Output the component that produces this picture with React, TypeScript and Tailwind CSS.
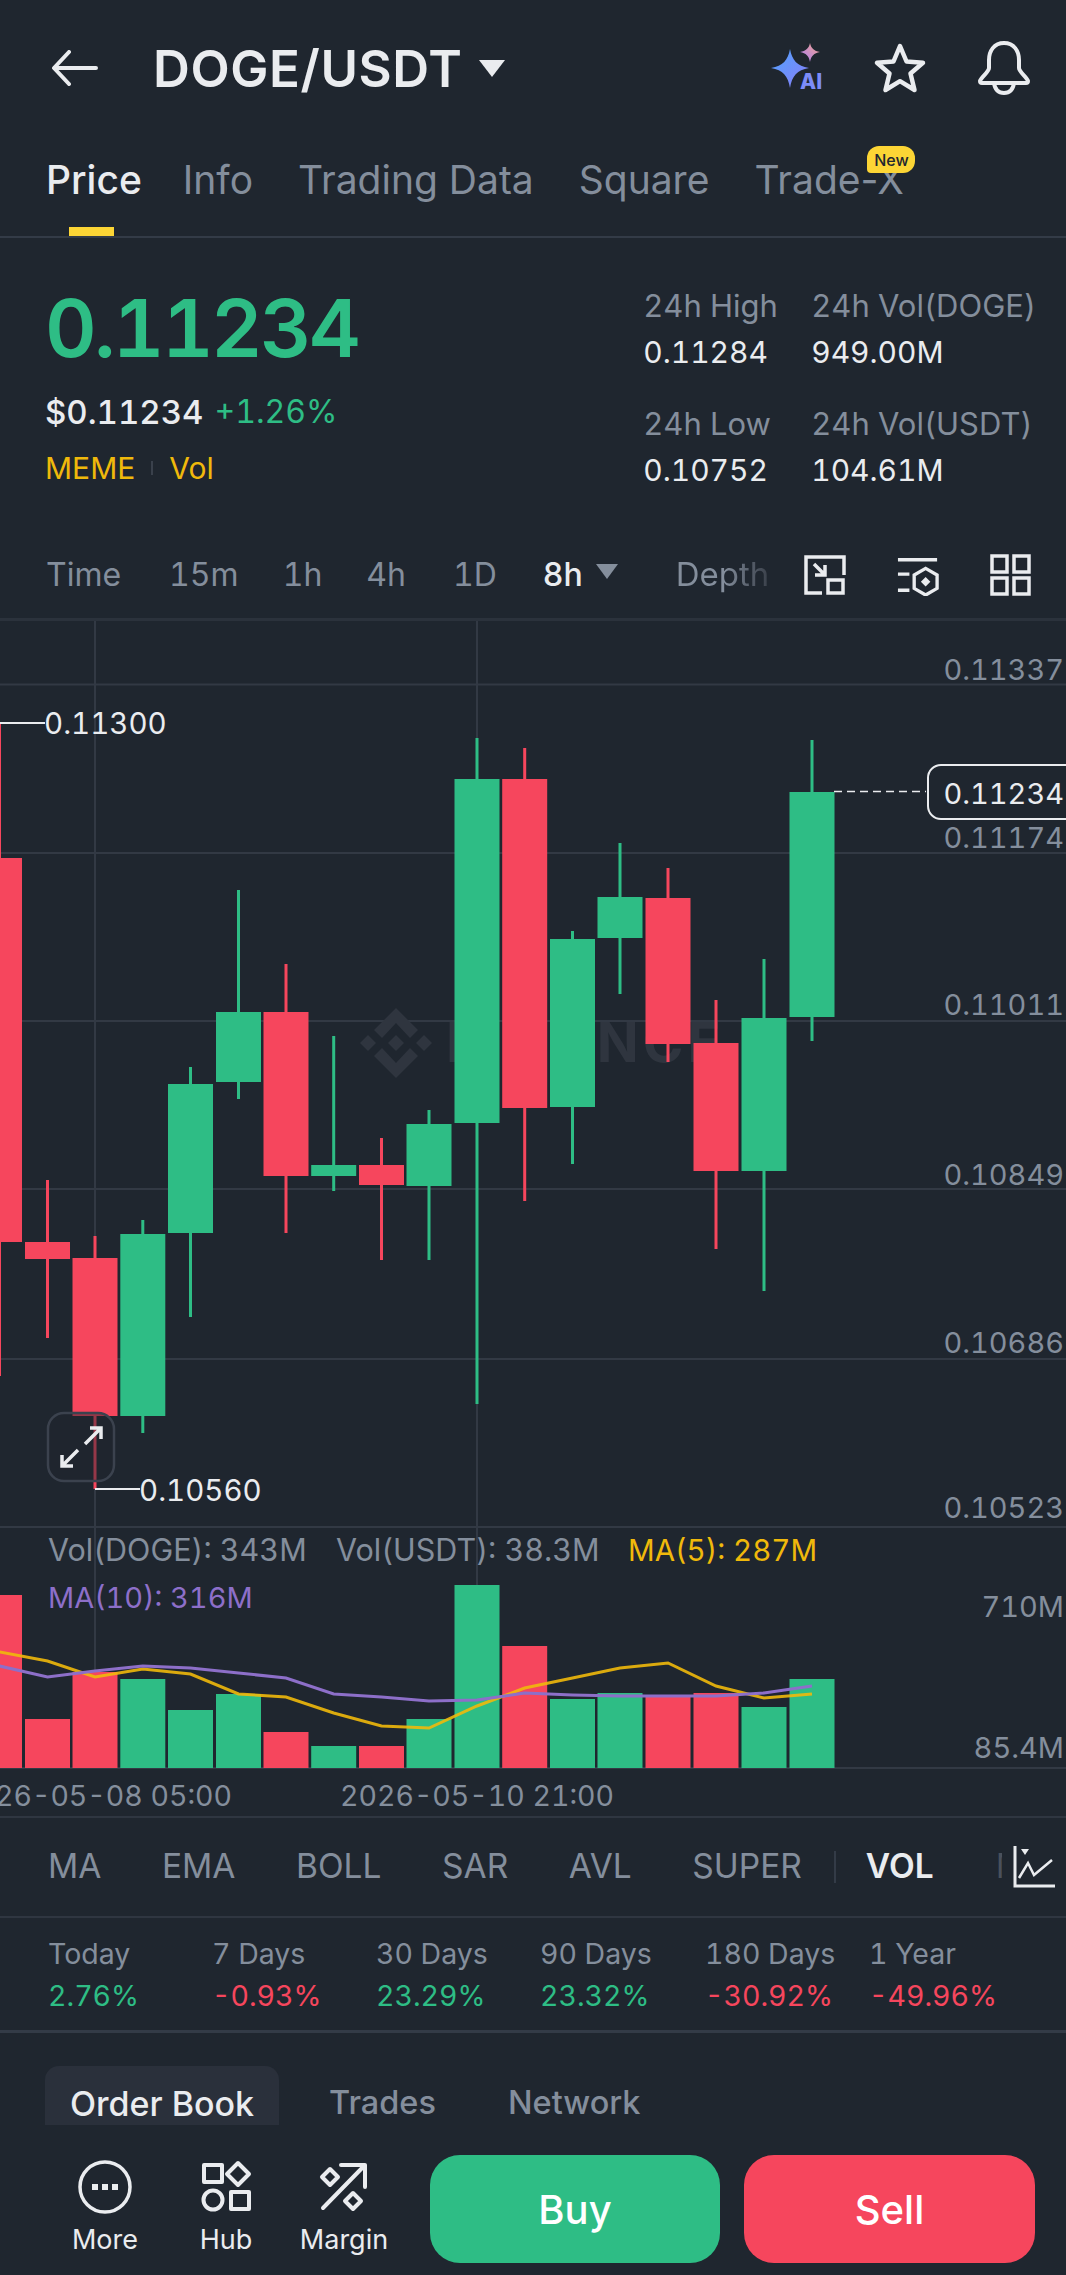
import React from "react";

const GREEN = "#2ebd85";
const RED = "#f6465d";

// candle geometry read off the screenshot: [x, open/top, bottom, wick top, wick bottom, up?]
const candles: [number, number, number, number, number, boolean][] = [
  [-0.5, 858, 1242, 723, 1376, false],
  [47.5, 1242, 1259, 1180, 1338, false],
  [95, 1258, 1416, 1236, 1489, false],
  [142.8, 1234, 1416, 1220, 1433, true],
  [190.5, 1084, 1233, 1067, 1317, true],
  [238.5, 1012, 1082, 890, 1099, true],
  [286, 1012, 1176, 964, 1233, false],
  [333.7, 1165, 1176, 1036, 1191, true],
  [381.5, 1165, 1185, 1138, 1260, false],
  [429, 1124, 1186, 1110, 1260, true],
  [477, 779, 1123, 738, 1404, true],
  [524.7, 779, 1108, 748, 1201, false],
  [572.5, 939, 1107, 931, 1164, true],
  [620, 897, 938, 843, 994, true],
  [668, 898, 1044, 868, 1062, false],
  [716, 1043, 1171, 1000, 1249, false],
  [764, 1018, 1171, 959, 1291, true],
  [812, 792, 1017, 740, 1041, true],
];

const volTops = [1595, 1719, 1672, 1679, 1710, 1694, 1732, 1746, 1746, 1719, 1585, 1646, 1699, 1693, 1696, 1693, 1707, 1679];
const ma5 = [1652, 1661, 1677, 1669, 1674, 1694, 1697, 1713, 1726, 1728, 1706, 1688, 1678, 1668, 1663, 1686, 1698, 1694];
const ma10 = [1666, 1677, 1671, 1666, 1668, 1673, 1678, 1694, 1697, 1701, 1700, 1693, 1695, 1696, 1696, 1696, 1693, 1686];

const priceAxis: [string, number][] = [
  ["0.11337", 680],
  ["0.11174", 848],
  ["0.11011", 1015],
  ["0.10849", 1185],
  ["0.10686", 1353],
  ["0.10523", 1518],
];

const gridY = [684.5, 853, 1021, 1189, 1359, 1527, 1768];

function linePoints(ys: number[]) {
  return ys.map((y, i) => `${candles[i][0]},${y}`).join(" ");
}

function Chart() {
  return (
    <svg width={1066} height={1195} viewBox="0 621 1066 1195" className="block">
      {gridY.map((y) => (
        <line key={y} x1={0} x2={1066} y1={y} y2={y} stroke="#323944" strokeWidth={2} />
      ))}
      <line x1={95} x2={95} y1={620} y2={1768} stroke="#323944" strokeWidth={2} />
      <line x1={477} x2={477} y1={620} y2={1768} stroke="#323944" strokeWidth={2} />

      {/* watermark */}
      <g fill="#2f353f" transform="translate(396 1043)">
        <polygon points="0,-35 22,-13 14,-5 0,-20 -14,-5 -22,-13" />
        <polygon points="0,35 22,13 14,5 0,20 -14,5 -22,13" />
        <polygon points="0,-8 8,0 0,8 -8,0" />
        <polygon points="-28,-8 -20,0 -28,8 -36,0" />
        <polygon points="28,-8 36,0 28,8 20,0" />
      </g>
      <text x={446} y={1062} fill="#2f353f" fontSize={55} fontWeight={700} letterSpacing={4}>
        BINANCE
      </text>

      {candles.map(([x, top, bottom, wt, wb, up], i) => (
        <g key={i} fill={up ? GREEN : RED}>
          <rect x={x - 1.5} y={wt} width={3} height={wb - wt} />
          <rect x={x - 22.5} y={top} width={45} height={bottom - top} />
        </g>
      ))}

      {/* high / low markers */}
      <path d="M0 723H45" stroke="#eaecef" strokeWidth={2} fill="none" />
      <text x={44} y={734} fill="#eaecef" fontSize={29.5}>0.11300</text>
      <path d="M95 1489H140" stroke="#eaecef" strokeWidth={2} fill="none" />
      <text x={139} y={1501} fill="#eaecef" fontSize={29.5}>0.10560</text>

      {/* price axis */}
      {priceAxis.map(([label, y]) => (
        <text key={label} x={1064} y={y} textAnchor="end" fill="#848e9c" fontSize={29}>{label}</text>
      ))}
      <line x1={834} x2={926} y1={791.5} y2={791.5} stroke="#eaecef" strokeWidth={1.5} strokeDasharray="8 5" />
      <rect x={928} y={765} width={160} height={54} rx={13} fill="#1f262f" stroke="#eaecef" strokeWidth={2} />
      <text x={1064} y={804} textAnchor="end" fill="#eaecef" fontSize={29}>0.11234</text>

      {/* expand button */}
      <rect x={48} y={1413} width={66} height={68} rx={16} fill="#1f262f" fillOpacity={0.45} stroke="#3b424e" strokeWidth={2.5} />
      <path d="M85 1444L101 1428M90 1428H101V1439M78 1450L62 1466M73 1466H62V1455" stroke="#eaecef" strokeWidth={3.5} fill="none" />

      {/* volume */}
      {candles.map(([x, , , , , up], i) => (
        <rect key={i} x={x - 22.5} y={volTops[i]} width={45} height={1768 - volTops[i]} fill={up ? GREEN : RED} />
      ))}
      <polyline points={linePoints(ma5)} fill="none" stroke="#f0b90b" strokeWidth={3} strokeOpacity={0.9} />
      <polyline points={linePoints(ma10)} fill="none" stroke="#8d6fc9" strokeWidth={3} />

      <text x={48} y={1561} fill="#848e9c" fontSize={30.5}>Vol(DOGE): 343M</text>
      <text x={336} y={1561} fill="#848e9c" fontSize={30.5}>Vol(USDT): 38.3M</text>
      <text x={628} y={1561} fill="#f0b90b" fontSize={29.5}>MA(5): 287M</text>
      <text x={48} y={1608} fill="#8d6fc9" fontSize={29}>MA(10): 316M</text>

      <text x={1064} y={1617} textAnchor="end" fill="#848e9c" fontSize={29}>710M</text>
      <text x={1064} y={1758} textAnchor="end" fill="#848e9c" fontSize={29}>85.4M</text>

      <text x={95} y={1806} textAnchor="middle" fill="#848e9c" fontSize={28.5}>2026-05-08 05:00</text>
      <text x={477} y={1806} textAnchor="middle" fill="#848e9c" fontSize={28.5}>2026-05-10 21:00</text>
    </svg>
  );
}

function AiIcon() {
  return (
    <svg width={56} height={52} viewBox="0 0 56 52">
      <defs>
        <linearGradient id="aiBig" x1="0" y1="0" x2="1" y2="1">
          <stop offset="0" stopColor="#4fa4ff" />
          <stop offset="1" stopColor="#8a7cf6" />
        </linearGradient>
        <linearGradient id="aiSmall" x1="0" y1="1" x2="1" y2="0">
          <stop offset="0" stopColor="#a77cf6" />
          <stop offset="1" stopColor="#f5a58c" />
        </linearGradient>
      </defs>
      <path d="M19 7C21 18 26 24 38 26C26 28 21 34 19 46C17 34 12 28 0 26C12 24 17 18 19 7Z" fill="url(#aiBig)" />
      <path d="M39 1C40 6 43 9 49 10C43 11 40 14 39 20C38 14 35 11 29 10C35 9 38 6 39 1Z" fill="url(#aiSmall)" />
      <text x={29} y={47} fill="#7c8cf8" fontSize={21} fontWeight={800}>AI</text>
    </svg>
  );
}

function Header() {
  return (
    <div className="flex h-[136px] items-center">
      <svg width={46} height={36} viewBox="0 0 46 36" className="ml-[52px]" fill="none" stroke="#eaecef" strokeWidth={4} strokeLinecap="round" strokeLinejoin="round">
        <path d="M44 18H3M17 2L2 18L17 34" />
      </svg>
      <span className="ml-[55px] text-[51px] leading-none font-semibold tracking-[0.6px] text-[#eaecef]">DOGE/USDT</span>
      <svg width={26} height={17} viewBox="0 0 26 17" className="ml-[17px]">
        <path d="M0 0H26L13 17Z" fill="#eaecef" />
      </svg>
      <div className="ml-auto mr-[36px] flex items-center">
        <AiIcon />
        <svg width={54} height={52} viewBox="0 0 54 52" className="ml-[46px]" fill="none" stroke="#eaecef" strokeWidth={4.5} strokeLinejoin="round">
          <path d="M27 4L33.5 19.5L50 20.8L37.5 31.5L41.5 48L27 39.2L12.5 48L16.5 31.5L4 20.8L20.5 19.5Z" />
        </svg>
        <svg width={52} height={54} viewBox="0 0 52 54" className="ml-[51px]" fill="none" stroke="#eaecef" strokeWidth={4} strokeLinejoin="round">
          <path d="M26 2C16 2 11 10 11 19V27C11 31 3 36 2 40C2 41.5 3 42 4 42H48C49 42 50 41.5 50 40C49 36 41 31 41 27V19C41 10 36 2 26 2Z" />
          <path d="M16 42C17 49 21 52 26 52C31 52 35 49 36 42" />
        </svg>
      </div>
    </div>
  );
}

function Tabs() {
  const tabs = ["Info", "Trading Data", "Square"];
  return (
    <div className="flex h-[102px] gap-[45px] border-b-2 border-[#333b47] pl-[46px] pt-[21px] text-[39px] leading-[46px] text-[#848e9c] normal-nums">
      <div className="relative -mr-[4px] h-full font-medium text-[#eaecef]">
        Price
        <div className="absolute bottom-0 left-[23px] h-[9px] w-[45px] bg-[#fcd535]" />
      </div>
      {tabs.map((t) => (
        <div key={t}>{t}</div>
      ))}
      <div className="relative">
        Trade-X
        <span className="absolute -top-[11px] left-[113px] flex h-[27px] w-[48px] items-center justify-center rounded-[12px] rounded-bl-[4px] bg-[#fcd535] text-[16px] leading-none font-medium text-[#202630]">
          New
        </span>
      </div>
    </div>
  );
}

function Stat({ label, value }: { label: string; value: string }) {
  return (
    <div className="flex flex-col">
      <span className="text-[31px] text-[#848e9c]">{label}</span>
      <span className="mt-[10px] text-[#eaecef]">{value}</span>
    </div>
  );
}

function Stats() {
  return (
    <div className="flex h-[297px] justify-between pl-[45px] pr-[30px] pt-[50px]">
      <div>
        <div className="text-[80px] leading-[80px] font-semibold tracking-[-2.7px] text-[#2ebd85]">0.11234</div>
        <div className="mt-[24px] flex gap-[11px] text-[32px] leading-[40px]">
          <span className="text-[33px] font-medium text-[#eaecef]">$0.11234</span>
          <span className="text-[#2ebd85]">+1.26%</span>
        </div>
        <div className="mt-[17px] flex items-center text-[30px] leading-[38px] text-[#f0b90b]">
          <span>MEME</span>
          <span className="mx-[16px] h-[14px] w-[2px] bg-[#3a414c]" />
          <span>Vol</span>
        </div>
      </div>
      <div className="grid grid-cols-[168px_auto] gap-y-[36px] self-start text-[30px] leading-[36px]">
        <Stat label="24h High" value="0.11284" />
        <Stat label="24h Vol(DOGE)" value="949.00M" />
        <Stat label="24h Low" value="0.10752" />
        <Stat label="24h Vol(USDT)" value="104.61M" />
      </div>
    </div>
  );
}

function IntervalBar() {
  return (
    <div className="flex h-[86px] items-center border-b-[3px] border-[#2b323c] pl-[46px] pb-[4px] text-[32px] leading-none text-[#848e9c]">
      <span>Time</span>
      <span className="ml-[48px]">15m</span>
      <span className="ml-[44px]">1h</span>
      <span className="ml-[44px]">4h</span>
      <span className="ml-[47px]">1D</span>
      <span className="ml-[46px] font-medium text-[#eaecef]">8h</span>
      <svg width={22} height={15} viewBox="0 0 22 15" className="ml-[13px] -mt-[6px]">
        <path d="M0 0H22L11 15Z" fill="#848e9c" />
      </svg>
      <span className="ml-[58px] w-[96px] shrink-0 bg-linear-to-r from-[#848e9c] from-50% to-[#353b45] bg-clip-text pb-[8px] -mb-[8px] text-[33px] text-transparent">Depth</span>
      <div className="ml-auto mr-[34px] flex items-center gap-[51px] text-[#eaecef]">
        <svg width={42} height={42} viewBox="0 0 42 42" fill="none" stroke="currentColor" strokeWidth={3.5}>
          <path d="M18 39H2V3H40V21" />
          <rect x={24} y={26} width={15} height={13} />
          <path d="M10 10L21 21M21 11V21H11" />
        </svg>
        <svg width={42} height={42} viewBox="0 0 44 42" fill="none" stroke="currentColor" strokeWidth={3.5}>
          <path d="M1 5H42M1 20H13M1 37H13" />
          <path d="M30 14L42 21V35L30 42L18 35V21Z" />
          <path d="M30 23L35 28L30 33L25 28Z" fill="currentColor" stroke="none" />
        </svg>
        <svg width={42} height={42} viewBox="0 0 42 42" fill="none" stroke="currentColor" strokeWidth={3.5}>
          <rect x={2} y={2} width={15} height={16} />
          <rect x={24} y={2} width={15} height={16} />
          <rect x={2} y={24} width={15} height={16} />
          <rect x={24} y={24} width={15} height={16} />
        </svg>
      </div>
    </div>
  );
}

function Indicators() {
  const items = ["MA", "EMA", "BOLL", "SAR", "AVL", "SUPER"];
  return (
    <div className="flex h-[102px] items-center border-y-2 border-[#2f3641] pl-[48px] text-[33.5px] leading-none text-[#848e9c]">
      <div className="flex gap-[60.6px]">
        {items.map((t) => (
          <span key={t}>{t}</span>
        ))}
      </div>
      <span className="ml-[32px] h-[32px] w-[2px] bg-[#333b47]" />
      <span className="ml-[30px] font-semibold text-[#eaecef]">VOL</span>
      <span className="ml-[62px] w-[6px] overflow-hidden text-[#4a515c]">M</span>
      <svg width={44} height={44} viewBox="0 0 44 44" className="ml-auto mr-[9px]" fill="none" stroke="#eaecef" strokeWidth={2.5}>
        <path d="M2 1V41H42" strokeWidth={3} />
        <path d="M8 4H16L12 10Z" fill="#eaecef" stroke="none" />
        <path d="M6 33L15 18L21 30L39 15" />
      </svg>
    </div>
  );
}

function Performance() {
  const rows: [string, string][] = [
    ["Today", "2.76%"],
    ["7 Days", "-0.93%"],
    ["30 Days", "23.29%"],
    ["90 Days", "23.32%"],
    ["180 Days", "-30.92%"],
    ["1 Year", "-49.96%"],
  ];
  return (
    <div className="grid h-[115px] grid-cols-[164px_164px_164px_165px_164px_auto] border-b-[3px] border-[#333b47] pl-[48px] pt-[15px] text-[28.5px] leading-[42px]">
      {rows.map(([label, value]) => (
        <div key={label} className="flex flex-col">
          <span className="text-[#848e9c]">{label}</span>
          <span className={value.startsWith("-") ? "text-[#f6465d]" : "text-[#2ebd85]"}>{value}</span>
        </div>
      ))}
    </div>
  );
}

function BookTabs() {
  return (
    <div className="flex h-[92px] items-end pl-[45px] text-[32.5px] text-[#848e9c]">
      <div className="flex h-[59px] w-[234px] items-center justify-center rounded-t-[14px] bg-[#2a303b] pt-[15px] text-[34px] font-medium text-[#eaecef]">
        Order Book
      </div>
      <div className="ml-[50px] flex h-[59px] items-center pt-[16px] font-medium">Trades</div>
      <div className="ml-[72px] flex h-[59px] items-center pt-[16px] font-medium">Network</div>
    </div>
  );
}

function BarItem({ label, width, children }: { label: string; width: string; children: React.ReactNode }) {
  return (
    <div className={`flex flex-col items-center pt-[32px] ${width}`}>
      {children}
      <span className="mt-[6px] text-[27px] leading-[34px] text-[#eaecef]">{label}</span>
    </div>
  );
}

function BottomBar() {
  return (
    <div className="flex h-[150px] pl-[45px] pr-[31px]">
      <BarItem label="More" width="w-[120px]">
        <svg width={60} height={60} viewBox="0 0 60 60" fill="none" stroke="#eaecef" strokeWidth={3.5}>
          <circle cx={30} cy={30} r={25} />
          <path d="M17 27h6v6h-6zM27 27h6v6h-6zM37 27h6v6h-6z" fill="#eaecef" stroke="none" />
        </svg>
      </BarItem>
      <BarItem label="Hub" width="w-[122px]">
        <svg width={60} height={60} viewBox="0 0 60 60" fill="none" stroke="#eaecef" strokeWidth={4} strokeLinejoin="round">
          <rect x={8} y={8} width={18} height={17} />
          <path d="M42 6L53 17L42 28L31 17Z" />
          <circle cx={17} cy={43} r={9.5} />
          <rect x={35} y={35} width={18} height={17} />
        </svg>
      </BarItem>
      <BarItem label="Margin" width="w-[114px]">
        <svg width={60} height={60} viewBox="0 0 60 60" fill="none" stroke="#eaecef" strokeWidth={4} strokeLinecap="round" strokeLinejoin="round">
          <path d="M9 51L51 8M27 8H51V30" />
          <path d="M16 12L24 20L16 28L8 20Z" />
          <path d="M39 36L47 44L39 52L31 44Z" />
        </svg>
      </BarItem>
      <div className="ml-auto flex gap-[24px] pt-[30px] text-[40px] font-medium text-white">
        <div className="flex h-[108px] w-[290px] items-center justify-center rounded-[30px] bg-[#2ebd85] pt-[2px]">Buy</div>
        <div className="flex h-[108px] w-[291px] items-center justify-center rounded-[30px] bg-[#f6465d] pt-[2px]">Sell</div>
      </div>
    </div>
  );
}

export default function App() {
  return (
    <div className="flex h-[2275px] w-[1066px] flex-col overflow-hidden bg-[#1f262f] font-[Inter,sans-serif] tabular-nums">
      <Header />
      <Tabs />
      <Stats />
      <IntervalBar />
      <Chart />
      <Indicators />
      <Performance />
      <BookTabs />
      <BottomBar />
    </div>
  );
}
